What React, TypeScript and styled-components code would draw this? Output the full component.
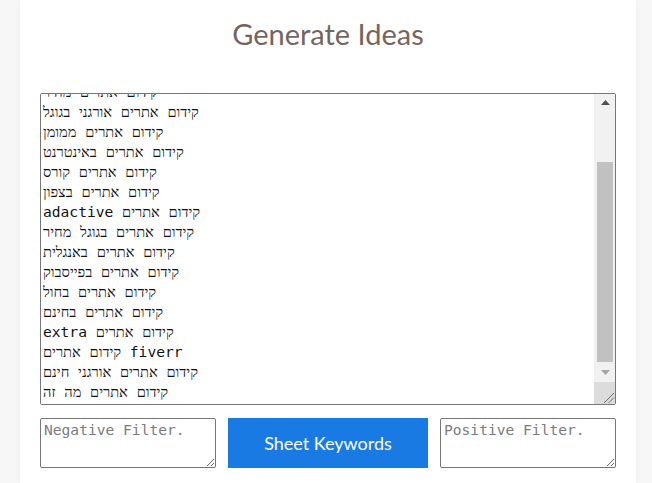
import React, { useEffect, useRef } from "react";
import styled, { createGlobalStyle } from "styled-components";

const GlobalStyle = createGlobalStyle`
  html, body {
    margin: 0;
    padding: 0;
    background: #f7f7f7;
  }
  body {
    font-family: Lato, "Open Sans", sans-serif;
  }
`;

const Page = styled.div`
  min-height: 483px;
  padding: 0 16px 0 20px;
  box-sizing: border-box;
`;

const Card = styled.main`
  background: #ffffff;
  width: 616px;
  min-height: 483px;
  box-sizing: border-box;
  padding: 12px 20px 16px;
  box-shadow: 0 0 8px rgba(0, 0, 0, 0.04);
  display: flex;
  flex-direction: column;
`;

const Title = styled.h1`
  margin: 0;
  height: 81px;
  font-family: Lato, "Open Sans", sans-serif;
  font-weight: 400;
  font-size: 29px;
  line-height: 44px;
  color: #76655f;
  text-align: center;
`;

const monoFont = `"DejaVu Sans Mono", "Liberation Serif", monospace`;

const KeywordBox = styled.div`
  display: flex;
  width: 576px;
  height: 312px;
  box-sizing: border-box;
  border: 1px solid #767676;
  border-radius: 2px;
  background: #fff;
  overflow: hidden;
`;

const KeywordArea = styled.textarea`
  flex: 1;
  min-width: 0;
  height: 100%;
  box-sizing: border-box;
  margin: 0;
  padding: 2px;
  border: none;
  font-family: ${monoFont};
  font-size: 14.6px;
  line-height: 20px;
  color: #111;
  background: #fff;
  direction: ltr;
  resize: none;
  overflow: hidden;
  outline: none;
`;

const ScrollBar = styled.div`
  width: 21px;
  flex: none;
  display: flex;
  flex-direction: column;
  background: #f1f1f1;
`;

const ArrowButton = styled.div<{ $h: number }>`
  height: ${(p) => p.$h}px;
  flex: none;
  display: flex;
  align-items: center;
  justify-content: center;
  padding-left: 1px;
`;

const Track = styled.div`
  flex: 1;
  display: flex;
  flex-direction: column;
  justify-content: flex-end;
`;

const Thumb = styled.div`
  height: 200px;
  margin: 0 2px 0 3px;
  background: #c1c1c1;
`;

const Corner = styled.div`
  height: 22px;
  flex: none;
  background: #dcdcdc;
  display: flex;
  align-items: flex-end;
  justify-content: flex-end;
`;

const Controls = styled.div`
  margin-top: 13px;
  display: grid;
  grid-template-columns: 176px 1fr 176px;
  column-gap: 12px;
  width: 576px;
`;

const FilterArea = styled.textarea`
  display: block;
  box-sizing: border-box;
  height: 50px;
  width: 100%;
  margin: 0;
  padding: 2px 3px;
  border: 1px solid #767676;
  border-radius: 2px;
  font-family: ${monoFont};
  font-size: 14.6px;
  line-height: 18px;
  color: #111;
  outline: none;
  &::placeholder {
    color: #7c7c7c;
  }
`;

const SheetButton = styled.button`
  height: 50px;
  border: none;
  border-radius: 0;
  background: #1a7ae3;
  color: #fff;
  font-family: Lato, "Open Sans", sans-serif;
  font-size: 18px;
  cursor: pointer;
`;

const keywords = [
  "קידום אתרים",
  "קידום אתרים אורגני",
  "קידום אתרים בגוגל",
  "קידום אתרים מחיר",
  "קידום אתרים אורגני בגוגל",
  "קידום אתרים ממומן",
  "קידום אתרים באינטרנט",
  "קידום אתרים קורס",
  "קידום אתרים בצפון",
  "adactive קידום אתרים",
  "קידום אתרים בגוגל מחיר",
  "קידום אתרים באנגלית",
  "קידום אתרים בפייסבוק",
  "קידום אתרים בחול",
  "קידום אתרים בחינם",
  "extra קידום אתרים",
  "קידום אתרים fiverr",
  "קידום אתרים אורגני חינם",
  "קידום אתרים מה זה",
];

export default function App() {
  const areaRef = useRef<HTMLTextAreaElement>(null);

  useEffect(() => {
    const el = areaRef.current;
    if (el) el.scrollTop = el.scrollHeight;
  }, []);

  return (
    <>
      <GlobalStyle />
      <Page>
        <Card>
          <Title>Generate Ideas</Title>
          <KeywordBox>
            <KeywordArea
              ref={areaRef}
              defaultValue={keywords.join("\n")}
              spellCheck={false}
            />
            <ScrollBar>
              <ArrowButton $h={17}>
                <svg width="9" height="5" viewBox="0 0 9 5">
                  <polygon points="0,5 4.5,0 9,5" fill="#505050" />
                </svg>
              </ArrowButton>
              <Track>
                <Thumb />
              </Track>
              <ArrowButton $h={20}>
                <svg width="9" height="5" viewBox="0 0 9 5">
                  <polygon points="0,0 4.5,5 9,0" fill="#a3a3a3" />
                </svg>
              </ArrowButton>
              <Corner>
                <svg width="12" height="12" viewBox="0 0 12 12">
                  <line x1="1" y1="11" x2="11" y2="1" stroke="#6e6e6e" strokeWidth="1" />
                  <line x1="5.5" y1="11" x2="11" y2="5.5" stroke="#6e6e6e" strokeWidth="1" />
                </svg>
              </Corner>
            </ScrollBar>
          </KeywordBox>
          <Controls>
            <FilterArea placeholder="Negative Filter." />
            <SheetButton>Sheet Keywords</SheetButton>
            <FilterArea placeholder="Positive Filter." />
          </Controls>
        </Card>
      </Page>
    </>
  );
}
